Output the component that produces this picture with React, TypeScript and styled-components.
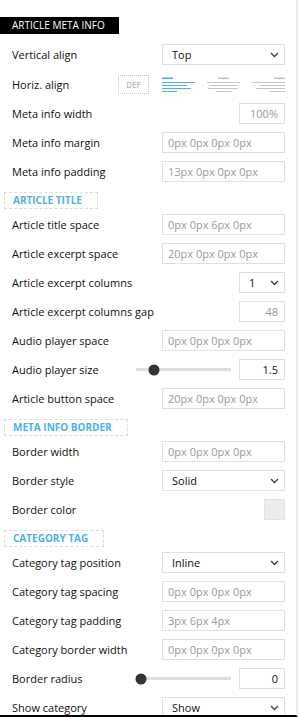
import React from 'react';
import styled, { createGlobalStyle } from 'styled-components';

const Global = createGlobalStyle`
  html, body { margin: 0; padding: 0; background: #fff; overflow: hidden; }
  body { font-family: 'Open Sans', 'DejaVu Sans', sans-serif; }
`;

const Panel = styled.div`
  width: 298px;
  height: 717px;
  box-sizing: border-box;
  border-right: 2px solid #ececec;
  border-bottom: 2px solid #000;
  overflow: hidden;
  padding-top: 17px;
  background: #fff;
`;

const PanelTitle = styled.div`
  width: fit-content;
  background: #000;
  color: #fff;
  font-size: 10px;
  height: 17px;
  line-height: 17px;
  padding: 0 14px 0 12px;
  text-transform: uppercase;
`;

const Body = styled.div`
  margin-top: 10px;
  padding-left: 12px;
  width: 273px;
  display: flex;
  flex-direction: column;
  gap: 8px;
`;

const Row = styled.div<{ $h?: number }>`
  display: flex;
  align-items: center;
  justify-content: space-between;
  height: ${(p) => p.$h ?? 21}px;
  flex: none;
`;

const Label = styled.span`
  font-size: 11px;
  color: #111;
  white-space: nowrap;
`;

const SectionTitle = styled.div`
  align-self: flex-start;
  flex: none;
  box-sizing: border-box;
  height: 17px;
  margin: 2px 0 -3px -8px;
  padding: 0 15px 0 8px;
  border: 1px dashed #dcdcdc;
  color: #4db2ec;
  font-size: 10px;
  font-weight: 700;
  line-height: 15px;
  text-transform: uppercase;
`;

const TextBox = styled.input<{ $narrow?: boolean; $right?: boolean }>`
  width: ${(p) => (p.$narrow ? 46 : 123)}px;
  height: 21px;
  box-sizing: border-box;
  border: 1px solid #e0e0e0;
  border-radius: 0;
  padding: 0 6px 0 5px;
  margin: 0;
  font-family: 'Open Sans', 'DejaVu Sans', sans-serif;
  font-size: 11px;
  color: #111;
  text-align: ${(p) => (p.$right ? 'right' : 'left')};
  background: #fff;
  outline: none;
  &::placeholder { color: #9a9a9a; opacity: 1; }
`;

const SelectBox = styled.div<{ $narrow?: boolean }>`
  width: ${(p) => (p.$narrow ? 46 : 123)}px;
  height: 21px;
  box-sizing: border-box;
  border: 1px solid #e0e0e0;
  padding: 0 5px 0 9px;
  display: flex;
  align-items: center;
  justify-content: space-between;
  font-size: 11px;
  color: #111;
  background: #fff;
`;

const SliderWrap = styled.div`
  display: flex;
  align-items: center;
  gap: 8px;
`;

const Track = styled.div`
  position: relative;
  width: 95px;
  height: 3px;
  background: #dedede;
`;

const Thumb = styled.div`
  position: absolute;
  top: 50%;
  width: 11px;
  height: 11px;
  border-radius: 50%;
  background: #333;
  transform: translate(-50%, -50%);
`;

const Swatch = styled.div`
  width: 21px;
  height: 21px;
  box-sizing: border-box;
  background: #ececec;
  border: 1px solid #e3e3e3;
`;

const AlignGroup = styled.div`
  display: flex;
  align-items: center;
  gap: 12px;
`;

const DefBox = styled.div`
  width: 31px;
  height: 19px;
  box-sizing: border-box;
  border: 1px dotted #c2c2c2;
  margin-right: 1px;
  display: flex;
  align-items: center;
  justify-content: center;
  font-size: 8px;
  font-weight: 600;
  color: #bdbdbd;
`;

const Chevron = () => (
  <svg width="9" height="6" viewBox="0 0 9 6">
    <path d="M1 1 L4.5 4.5 L8 1" fill="none" stroke="#444" strokeWidth="1.4" />
  </svg>
);

type Line = [number, number];
const AlignIcon = ({ bar, lines, color }: { bar: Line; lines: Line[]; color: string }) => (
  <svg width="33" height="15" viewBox="0 0 33 15">
    <rect x={bar[0]} y={0.5} width={bar[1] - bar[0]} height={1.6} fill={color} />
    {lines.map((l, i) => (
      <rect key={i} x={l[0]} y={5 + i * 3} width={l[1] - l[0]} height={1} fill={color} />
    ))}
  </svg>
);

const Select = ({ value, narrow }: { value: string; narrow?: boolean }) => (
  <SelectBox $narrow={narrow}>
    <span>{value}</span>
    <Chevron />
  </SelectBox>
);

const Slider = ({ pos, value }: { pos: number; value: string }) => (
  <SliderWrap>
    <Track>
      <Thumb style={{ left: pos }} />
    </Track>
    <TextBox $narrow $right readOnly value={value} />
  </SliderWrap>
);

const Field = ({ label, children }: { label: string; children: React.ReactNode }) => (
  <Row>
    <Label>{label}</Label>
    {children}
  </Row>
);

const Text = ({ ph, narrow, right }: { ph: string; narrow?: boolean; right?: boolean }) => (
  <TextBox readOnly placeholder={ph} $narrow={narrow} $right={right} />
);

export default function App() {
  return (
    <>
      <Global />
      <Panel>
        <PanelTitle>Article meta info</PanelTitle>
        <Body>
          <Field label="Vertical align"><Select value="Top" /></Field>
          <Row $h={22}>
            <Label>Horiz. align</Label>
            <AlignGroup>
              <DefBox>DEF</DefBox>
              <AlignIcon color="#4db2ec" bar={[0, 11]} lines={[[0, 33], [0, 25], [0, 29], [0, 15]]} />
              <AlignIcon color="#c4c4c4" bar={[11, 22]} lines={[[0, 33], [3, 30], [1, 31], [9, 24]]} />
              <AlignIcon color="#c4c4c4" bar={[22, 33]} lines={[[0, 33], [8, 33], [4, 33], [18, 33]]} />
            </AlignGroup>
          </Row>
          <Field label="Meta info width"><Text ph="100%" narrow right /></Field>
          <Field label="Meta info margin"><Text ph="0px 0px 0px 0px" /></Field>
          <Field label="Meta info padding"><Text ph="13px 0px 0px 0px" /></Field>

          <SectionTitle>Article title</SectionTitle>
          <Field label="Article title space"><Text ph="0px 0px 6px 0px" /></Field>
          <Field label="Article excerpt space"><Text ph="20px 0px 0px 0px" /></Field>
          <Field label="Article excerpt columns"><Select value="1" narrow /></Field>
          <Field label="Article excerpt columns gap"><Text ph="48" narrow right /></Field>
          <Field label="Audio player space"><Text ph="0px 0px 0px 0px" /></Field>
          <Field label="Audio player size"><Slider pos={18} value="1.5" /></Field>
          <Field label="Article button space"><Text ph="20px 0px 0px 0px" /></Field>

          <SectionTitle>Meta info border</SectionTitle>
          <Field label="Border width"><Text ph="0px 0px 0px 0px" /></Field>
          <Field label="Border style"><Select value="Solid" /></Field>
          <Field label="Border color"><Swatch /></Field>

          <SectionTitle>Category tag</SectionTitle>
          <Field label="Category tag position"><Select value="Inline" /></Field>
          <Field label="Category tag spacing"><Text ph="0px 0px 0px 0px" /></Field>
          <Field label="Category tag padding"><Text ph="3px 6px 4px" /></Field>
          <Field label="Category border width"><Text ph="0px 0px 0px 0px" /></Field>
          <Field label="Border radius"><Slider pos={5} value="0" /></Field>
          <Field label="Show category"><Select value="Show" /></Field>
        </Body>
      </Panel>
    </>
  );
}
